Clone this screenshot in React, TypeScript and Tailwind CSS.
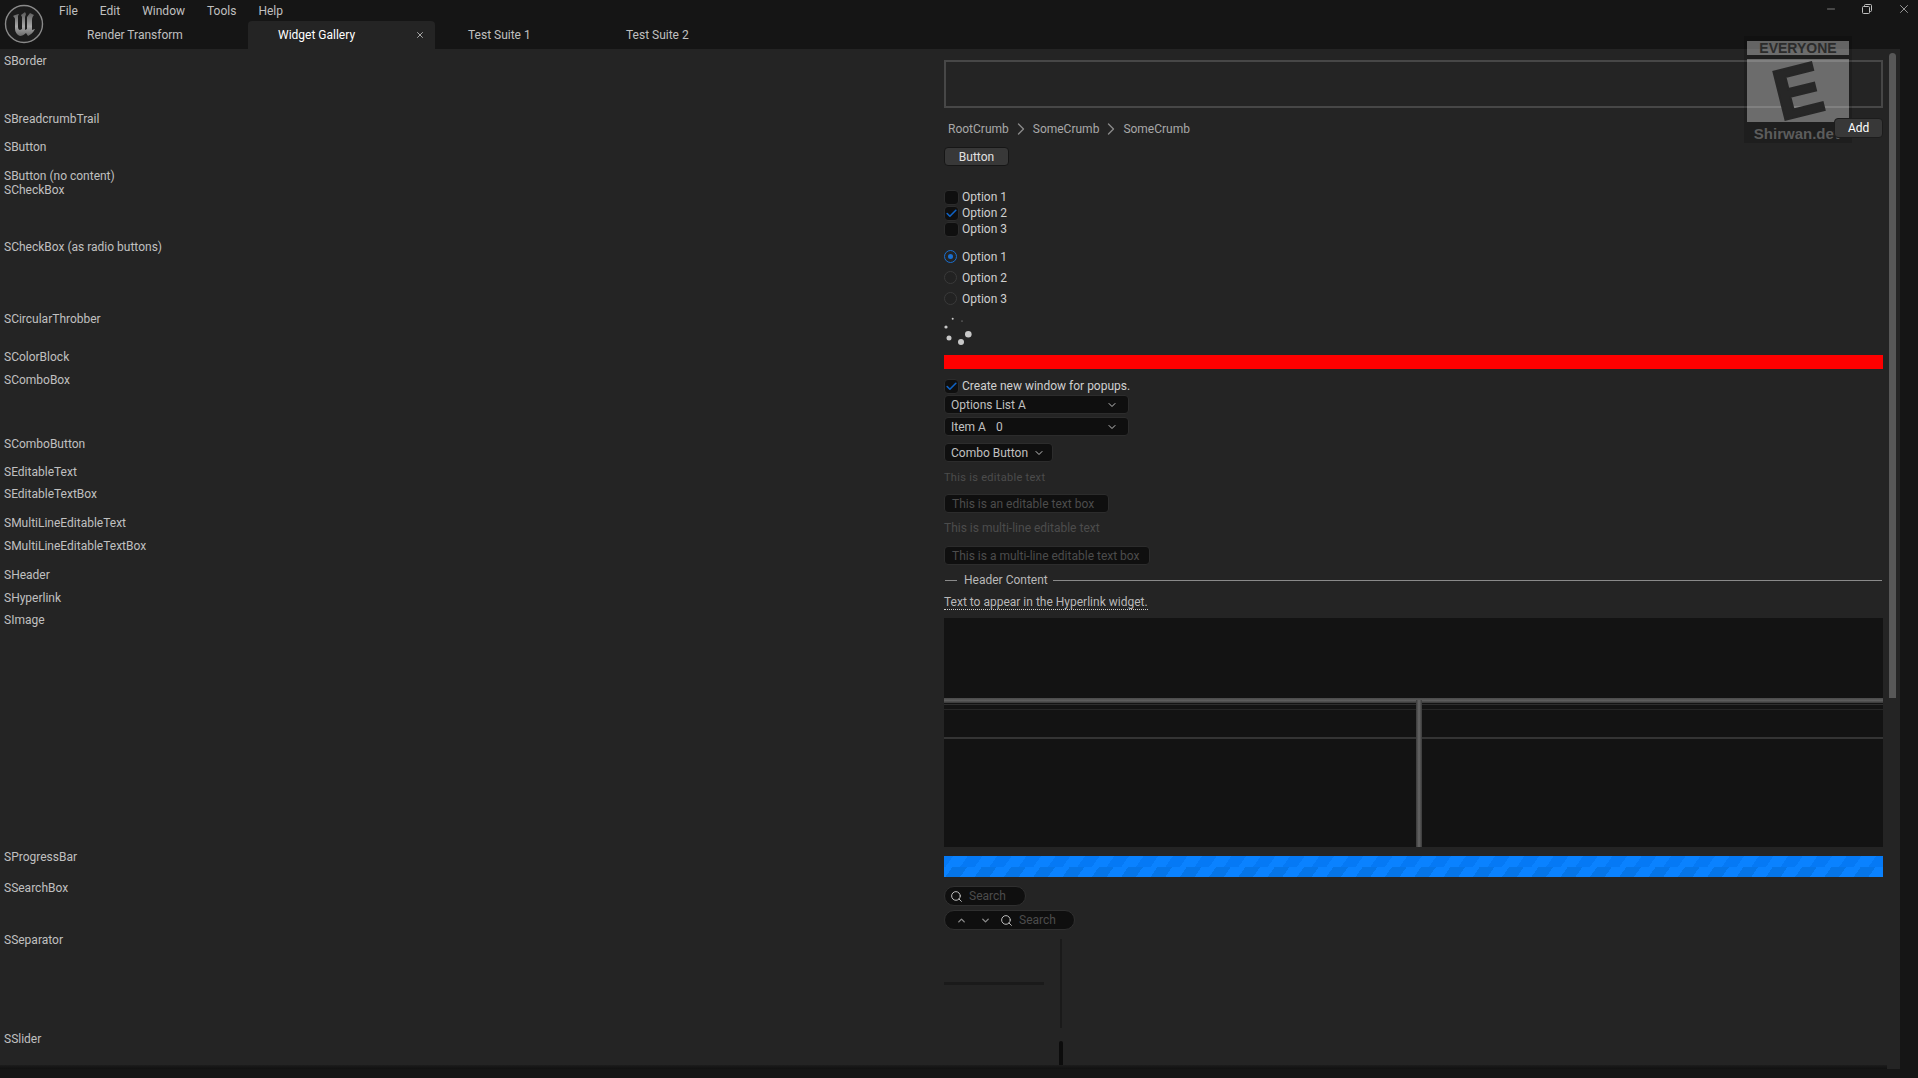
import React from 'react';
import { Check, ChevronDown, ChevronRight, ChevronUp, Minus, Search, X } from 'lucide-react';

const menus = ['File', 'Edit', 'Window', 'Tools', 'Help'];

const Logo = () => (
  <svg width="40" height="40" viewBox="0 0 40 40" className="shrink-0">
    <defs>
      <linearGradient id="ue" x1="0" y1="0" x2="0" y2="1">
        <stop offset="0" stopColor="#5a5a5a" />
        <stop offset="0.6" stopColor="#a8a8a8" />
        <stop offset="1" stopColor="#6a6a6a" />
      </linearGradient>
    </defs>
    <circle cx="20" cy="20" r="18.5" fill="#1c1c1c" stroke="#8a8a8a" strokeWidth="1.4" />
    <path
      d="M9 12c2-1 4-2 6-2l-1 2v11c0 2 1 3 2 3l2-1V13l-1-2 4-3 1 2-1 3v13l2-1V13l3-4 4 2c-2 2-2 4-2 6v9c1 0 2-1 3-1-2 4-5 6-7 7l-2-3c-2 2-4 3-6 3-3-1-5-4-5-7V15c0-1-1-2-2-3z"
      fill="url(#ue)"
    />
  </svg>
);

const Tab = ({ label, className }: { label: string; className: string }) => (
  <div className={`flex items-center text-[#c0c0c0] ${className}`}>{label}</div>
);

const TitleBar = () => (
  <div className="relative flex h-[49px] shrink-0 bg-[#151515]">
    <div className="pl-1 pt-1">
      <Logo />
    </div>
    <div className="flex flex-col pl-[15px]">
      <div className="flex h-[21px] items-center gap-[22px] text-[#c0c0c0]">
        {menus.map((m) => (
          <span key={m}>{m}</span>
        ))}
      </div>
      <div className="flex h-[28px] -ml-[15px]">
        <Tab label="Render Transform" className="w-[204px] pl-[43px]" />
        <div className="flex w-[187px] items-center justify-between rounded-t bg-[#242424] pl-[30px] pr-[10px] text-white">
          <span>Widget Gallery</span>
          <X size={10} strokeWidth={2} className="text-[#c0c0c0]" />
        </div>
        <Tab label="Test Suite 1" className="w-[191px] pl-[33px]" />
        <Tab label="Test Suite 2" className="pl-0" />
      </div>
    </div>
    <div className="ml-auto flex h-[18px] items-center gap-[24px] pr-[7px] text-[#c0c0c0]">
      <Minus size={12} strokeWidth={1.2} />
      <svg width="12" height="12" viewBox="0 0 12 12" fill="none" stroke="currentColor" strokeWidth="1">
        <rect x="1.5" y="3.5" width="7" height="7" rx="1" />
        <path d="M3.5 3.5V2.5a1 1 0 0 1 1-1h5a1 1 0 0 1 1 1v5a1 1 0 0 1-1 1H8.5" />
      </svg>
      <X size={14} strokeWidth={1.3} />
    </div>
  </div>
);

const Watermark = () => (
  <div className="absolute left-[1744px] top-[36px] z-10 flex h-[107px] w-[108px] flex-col items-center bg-black/15 pt-[5px]">
    <div className="flex h-[15px] w-[102px] items-center justify-center bg-white/35 text-[14px] font-bold leading-none text-[#2b2b2b] [font-family:'Liberation_Sans',sans-serif]">
      EVERYONE
    </div>
    <div className="mt-[4px] flex h-[65px] w-[102px] items-center justify-center overflow-hidden bg-white/35">
      <span className="-rotate-[14deg] text-[72px] font-bold leading-none text-[#272727] [font-family:'Liberation_Sans',sans-serif] [-webkit-text-stroke:2px_#272727]">
        E
      </span>
    </div>
    <div className="mt-[3px] text-[15px] font-bold leading-[18px] text-[#5c5c5c] [font-family:'Liberation_Sans',sans-serif]">
      Shirwan.dev
    </div>
  </div>
);

const CheckItem = ({ label, checked }: { label: string; checked?: boolean }) => (
  <div className="flex h-4 items-center gap-[3px] text-[#d0d0d0]">
    <div className="flex h-[15px] w-[15px] items-center justify-center rounded-sm border border-[#2c2c2c] bg-[#0f0f0f]">
      {checked && <Check size={13} strokeWidth={3} className="text-[#0f62c4]" />}
    </div>
    <span>{label}</span>
  </div>
);

const RadioItem = ({ label, checked }: { label: string; checked?: boolean }) => (
  <div className="flex h-[21px] items-center gap-[5px] text-[#d0d0d0]">
    <div
      className={`flex h-[13px] w-[13px] items-center justify-center rounded-full border ${
        checked ? 'border-[#1a6fd0]' : 'border-[#3a3a3a] bg-[#222222]'
      }`}
    >
      {checked && <div className="h-[5px] w-[5px] rounded-full bg-[#1a6fd0]" />}
    </div>
    <span>{label}</span>
  </div>
);

const ComboRow = ({ children }: { children: React.ReactNode }) => (
  <div className="flex h-[19px] w-[185px] items-center justify-between rounded-sm border border-[#2c2c2c] bg-[#0f0f0f] pl-[6px] pr-[10px] text-[#c0c0c0]">
    {children}
    <ChevronDown size={12} strokeWidth={2} />
  </div>
);

const TextBox = ({ label, width }: { label: string; width: string }) => (
  <div className={`flex h-[19px] items-center rounded-sm border border-[#2c2c2c] bg-[#0f0f0f] pl-[7px] text-[#4c4c4c] ${width}`}>
    {label}
  </div>
);

const SearchField = ({ nav }: { nav?: boolean }) => (
  <div
    className={`flex h-[20px] items-center rounded-full border border-[#2f2f2f] bg-[#0f0f0f] pl-[5px] text-[#4c4c4c] ${
      nav ? 'w-[131px]' : 'w-[82px]'
    }`}
  >
    {nav && (
      <div className="flex w-[50px] items-center gap-[13px] pl-[6px] text-[#8a8a8a]">
        <ChevronUp size={11} strokeWidth={3} />
        <ChevronDown size={11} strokeWidth={3} />
      </div>
    )}
    <Search size={13} strokeWidth={1.8} className="shrink-0 text-[#c0c0c0]" />
    <span className="ml-[6px]">Search</span>
  </div>
);

const ImageSample = () => (
  <div className="relative h-[229px] bg-[#131313]">
    <div className="absolute inset-x-0 top-[80px] h-[5px] bg-gradient-to-b from-[#4a4a4a] via-[#5c5c5c] to-[#383838]" />
    <div className="absolute inset-x-0 top-[86px] h-px bg-[#2e2e2e]" />
    <div className="absolute inset-x-0 top-[91px] h-px bg-[#262626]" />
    <div className="absolute inset-x-0 top-[119px] h-[2px] bg-[#343434]" />
    <div className="absolute bottom-0 left-[472px] top-[82px] w-[6px] bg-gradient-to-r from-[#3a3a3a] via-[#666666] to-[#3a3a3a]" />
  </div>
);

const StripeBar = () => (
  <div className="flex h-[21px] flex-col">
    <div className="h-1/2 bg-[repeating-linear-gradient(-55deg,#0579f5_0px,#0579f5_12px,#0a82ff_12px,#0a82ff_24px)]" />
    <div className="h-1/2 bg-[repeating-linear-gradient(-55deg,#0a82ff_0px,#0a82ff_12px,#0575e8_12px,#0575e8_24px)]" />
  </div>
);

const rows: { label: string; height: string; pad: string; content?: React.ReactNode }[] = [
  {
    label: 'SBorder',
    height: 'h-[58px]',
    pad: 'pt-[6px]',
    content: <div className="h-[48px] border-2 border-[#474747]" />,
  },
  {
    label: 'SBreadcrumbTrail',
    height: 'h-[28px]',
    pad: 'pt-[7px]',
    content: (
      <div className="flex items-center justify-between">
        <div className="flex items-center pl-1 text-[#a8a8a8]">
          <span>RootCrumb</span>
          <ChevronRight size={20} strokeWidth={1.6} className="mx-[2px] text-[#8a8a8a]" />
          <span>SomeCrumb</span>
          <ChevronRight size={20} strokeWidth={1.6} className="mx-[2px] text-[#8a8a8a]" />
          <span>SomeCrumb</span>
        </div>
        <div className="relative z-20 -mt-[2px] flex h-[20px] w-[49px] items-center rounded-sm border border-[#1c1c1c] bg-[#383838] pl-[13px] text-white">
          Add
        </div>
      </div>
    ),
  },
  {
    label: 'SButton',
    height: 'h-[29px]',
    pad: 'pt-[7px]',
    content: (
      <div className="flex h-[19px] w-[65px] items-center justify-center rounded-sm border border-[#161616] bg-[#383838] text-[#e0e0e0]">
        Button
      </div>
    ),
  },
  { label: 'SButton (no content)', height: 'h-[14px]', pad: '' },
  {
    label: 'SCheckBox',
    height: 'h-[57px]',
    pad: 'pt-[6px]',
    content: (
      <>
        <CheckItem label="Option 1" />
        <CheckItem label="Option 2" checked />
        <CheckItem label="Option 3" />
      </>
    ),
  },
  {
    label: 'SCheckBox (as radio buttons)',
    height: 'h-[72px]',
    pad: 'pt-[6px]',
    content: (
      <>
        <RadioItem label="Option 1" checked />
        <RadioItem label="Option 2" />
        <RadioItem label="Option 3" />
      </>
    ),
  },
  {
    label: 'SCircularThrobber',
    height: 'h-[38px]',
    pad: 'pt-[5px]',
    content: (
      <svg width="28" height="28" viewBox="0 0 28 28" fill="#c8c8c8">
        <circle cx="8.7" cy="1.7" r="1" />
        <circle cx="18" cy="4" r="0.5" />
        <circle cx="2" cy="10" r="1.6" />
        <circle cx="5" cy="21" r="2.5" />
        <circle cx="17" cy="25" r="3" />
        <circle cx="24.3" cy="17.3" r="3.3" />
      </svg>
    ),
  },
  {
    label: 'SColorBlock',
    height: 'h-[23px]',
    pad: 'pt-[5px]',
    content: <div className="h-[14px] bg-[#ff0000]" />,
  },
  {
    label: 'SComboBox',
    height: 'h-[64px]',
    pad: 'pt-[5px]',
    content: (
      <div className="flex flex-col gap-px">
        <CheckItem label="Create new window for popups." checked />
        <ComboRow>
          <span>Options List A</span>
        </ComboRow>
        <div className="h-px" />
        <ComboRow>
          <span className="flex gap-[10px]">
            <span>Item A</span>
            <span>0</span>
          </span>
        </ComboRow>
      </div>
    ),
  },
  {
    label: 'SComboButton',
    height: 'h-[28px]',
    pad: 'pt-[6px]',
    content: (
      <div className="flex h-[19px] w-[109px] items-center gap-[5px] rounded-sm border border-[#2c2c2c] bg-[#0f0f0f] pl-[6px] text-[#c0c0c0]">
        <span>Combo Button</span>
        <ChevronDown size={12} strokeWidth={2} />
      </div>
    ),
  },
  {
    label: 'SEditableText',
    height: 'h-[22px]',
    pad: 'pt-[5px]',
    content: <span className="text-[11px] tracking-[0.3px] text-[#4c4c4c]">This is editable text</span>,
  },
  {
    label: 'SEditableTextBox',
    height: 'h-[29px]',
    pad: 'pt-[7px]',
    content: <TextBox label="This is an editable text box" width="w-[165px]" />,
  },
  {
    label: 'SMultiLineEditableText',
    height: 'h-[23px]',
    pad: 'pt-[5px]',
    content: <span className="text-[#4c4c4c]">This is multi-line editable text</span>,
  },
  {
    label: 'SMultiLineEditableTextBox',
    height: 'h-[29px]',
    pad: 'pt-[7px]',
    content: <TextBox label="This is a multi-line editable text box" width="w-[206px]" />,
  },
  {
    label: 'SHeader',
    height: 'h-[23px]',
    pad: 'pt-[5px]',
    content: (
      <div className="flex items-center text-[#b8b8b8]">
        <div className="ml-px mr-[7px] h-px w-[12px] bg-[#8a8a8a]" />
        <span>Header Content</span>
        <div className="ml-[5px] mr-px h-px flex-1 bg-[#8a8a8a]" />
      </div>
    ),
  },
  {
    label: 'SHyperlink',
    height: 'h-[22px]',
    pad: 'pt-1',
    content: (
      <span className="border-b border-dotted border-[#d0d0d0] leading-[14px] text-[#b8b8b8]">
        Text to appear in the Hyperlink widget.
      </span>
    ),
  },
  {
    label: 'SImage',
    height: 'h-[237px]',
    pad: 'pt-[5px]',
    content: <ImageSample />,
  },
  {
    label: 'SProgressBar',
    height: 'h-[31px]',
    pad: 'pt-[6px]',
    content: <StripeBar />,
  },
  {
    label: 'SSearchBox',
    height: 'h-[52px]',
    pad: 'pt-[5px]',
    content: (
      <div className="flex flex-col gap-[4px]">
        <SearchField />
        <SearchField nav />
      </div>
    ),
  },
  {
    label: 'SSeparator',
    height: 'h-[99px]',
    pad: 'pt-[6px]',
    content: (
      <div className="flex h-[89px] items-center">
        <div className="h-[3px] w-[100px] bg-[#1a1a1a]" />
        <div className="ml-[16px] h-full w-[2px] bg-[#1a1a1a]" />
      </div>
    ),
  },
  {
    label: 'SSlider',
    height: 'h-[40px]',
    pad: 'pt-[9px]',
    content: <div className="ml-[115px] h-[30px] w-[4px] rounded-t-sm bg-[#0c0c0c]" />,
  },
];

export default function App() {
  return (
    <div className="relative flex h-screen w-full flex-col overflow-hidden bg-[#151515] text-[12px] leading-[14px] [font-family:Roboto,sans-serif]">
      <TitleBar />
      <Watermark />
      <div className="relative mb-[9px] mr-[18px] flex-1 overflow-hidden bg-[#242424] pl-1 pr-[17px] pt-[5px]">
        {rows.map((row) => (
          <div key={row.label} className={`grid grid-cols-[940px_1fr] ${row.height}`}>
            <div className="text-[#c0c0c0]">{row.label}</div>
            <div className={`min-w-0 ${row.pad}`}>{row.content}</div>
          </div>
        ))}
        <div className="absolute right-[4px] top-[4px] h-[645px] w-[7px] rounded-t-full bg-[#575757]" />
        <div className="absolute bottom-0 left-0 h-[4px] w-[1887px] bg-gradient-to-b from-[#1c1c1c] to-[#111111]" />
      </div>
    </div>
  );
}
